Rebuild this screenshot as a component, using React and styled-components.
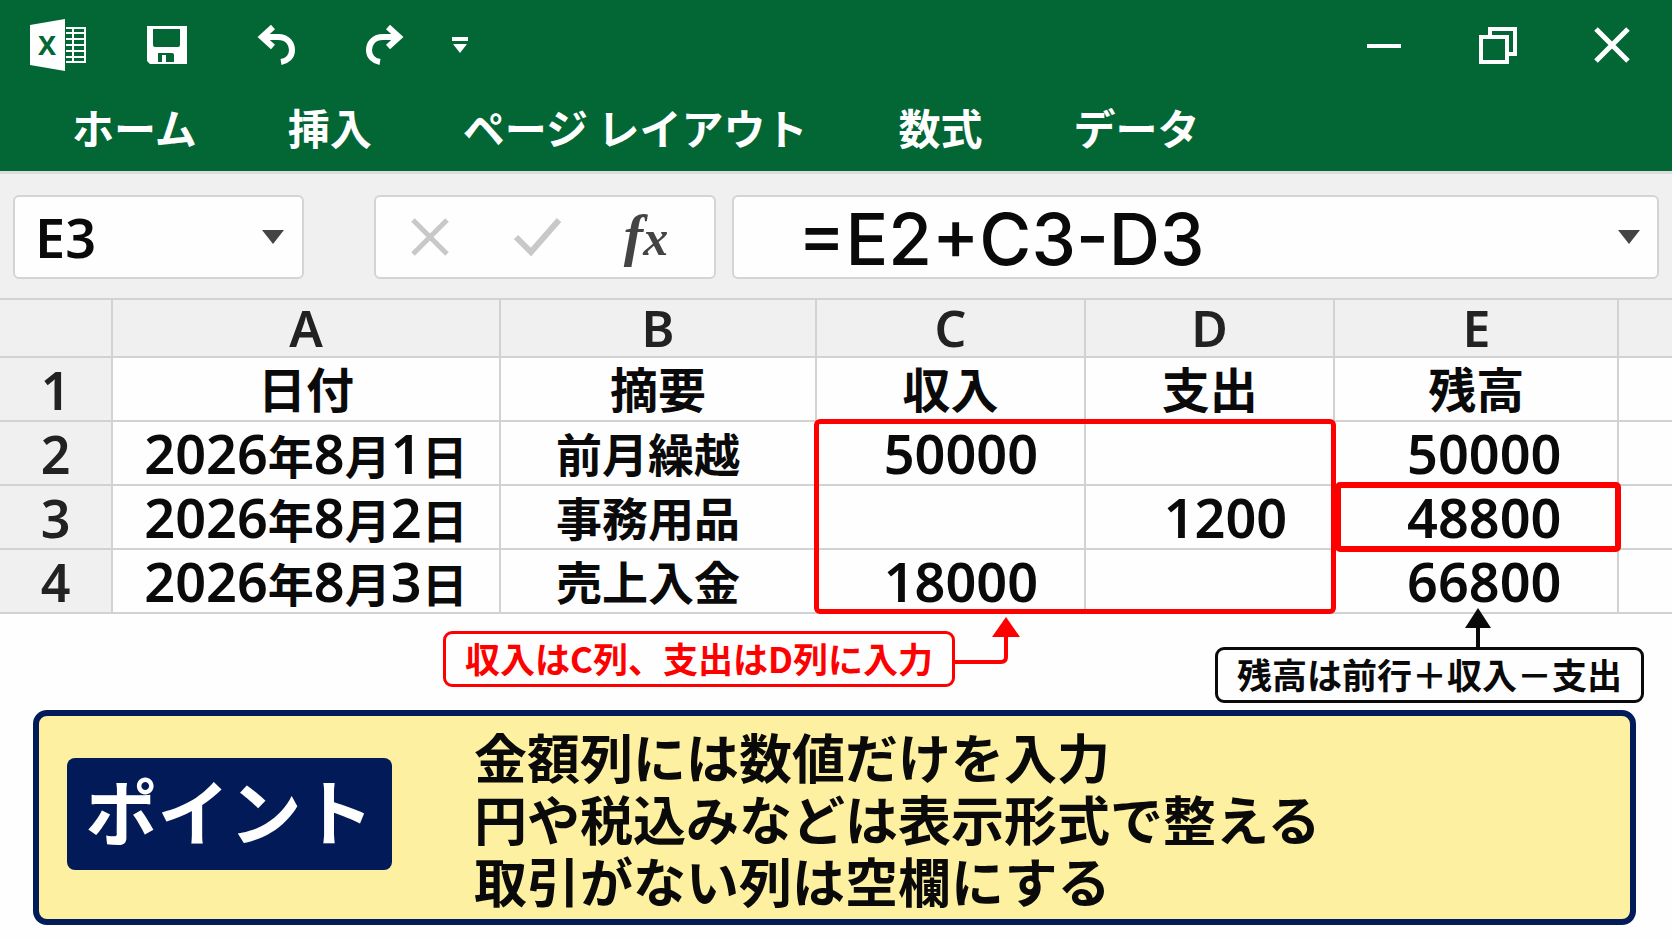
import React, { useState } from 'react'
import styled, { createGlobalStyle } from 'styled-components';

const rows = [
  { no: 2, date: [2026, 8, 1], memo: '前月繰越', income: '50000', expense: '', balance: '50000' },
  { no: 3, date: [2026, 8, 2], memo: '事務用品', income: '', expense: '1200', balance: '48800' },
  { no: 4, date: [2026, 8, 3], memo: '売上入金', income: '18000', expense: '', balance: '66800' },
]

const tabs = ['ホーム', '挿入', 'ページ レイアウト', '数式', 'データ']

function ExcelLogo() {
  return (
    <svg width="56" height="52" viewBox="0 0 56 52" role="img" aria-label="Excel">
      <path d="M0 6 L35 0 V52 L0 46 Z" fill="#fff" />
      <path d="M36 9 H55 V43 H36" fill="none" stroke="#fff" strokeWidth="2" />
      <path d="M36 14 H54 M36 20 H54 M36 26 H54 M36 32 H54 M36 38 H54 M43 9 V43" fill="none" stroke="#fff" strokeWidth="2" />
      <text x="17" y="36" textAnchor="middle" fontFamily="Noto Sans, sans-serif" fontWeight="700" fontSize="27" fill="#036635">X</text>
    </svg>
  )
}

function SaveIcon() {
  return (
    <svg width="42" height="40" viewBox="0 0 42 40">
      <path fillRule="evenodd" fill="#fff" d="M1 1 H41 V39 H4 L1 36 Z M7 4 V20 Q7 22 9 22 H32 Q34 22 34 20 V4 Z M12 28 V37 H16 V30 H20 V37 H28 V30 Q28 28 26 28 Z" />
    </svg>
  )
}

function UndoIcon({ flip }) {
  return (
    <svg width="40" height="42" viewBox="0 0 40 42">
      <g transform={flip ? 'translate(40 0) scale(-1 1)' : undefined} fill="none" stroke="#fff" strokeWidth="6">
        <path d="M17 3 L6 13 L17 23" />
        <path d="M7 13 H22 C32 13 36 20 36 26 C36 33 31 37 25 38" />
      </g>
    </svg>
  )
}

function App() {
  const [name, setName] = useState('E3')
  const [formula, setFormula] = useState('=E2+C3-D3')

  return (
    <>
      <GlobalStyle />
      <Header>
        <TitleBar>
          <QuickAccess>
            <IconSlot><ExcelLogo /></IconSlot>
            <IconButton aria-label="保存"><SaveIcon /></IconButton>
            <IconButton aria-label="元に戻す"><UndoIcon /></IconButton>
            <IconButton aria-label="やり直し"><UndoIcon flip /></IconButton>
            <IconButton $narrow aria-label="カスタマイズ">
              <svg width="16" height="16" viewBox="0 0 16 16" fill="#fff">
                <path d="M0 0 H16 V4 H0 Z M1 7 H15 L8 16 Z" />
              </svg>
            </IconButton>
          </QuickAccess>
          <WindowButtons>
            <IconButton aria-label="最小化">
              <svg width="34" height="38" viewBox="0 0 34 38"><path d="M0 20 H34" stroke="#fff" strokeWidth="4" /></svg>
            </IconButton>
            <IconButton aria-label="元のサイズに戻す">
              <svg width="38" height="38" viewBox="0 0 38 38" fill="none" stroke="#fff" strokeWidth="4">
                <path d="M2 11 H28 V36 H2 Z M11 11 V3 H36 V28 H28" />
              </svg>
            </IconButton>
            <IconButton aria-label="閉じる">
              <svg width="36" height="38" viewBox="0 0 36 38"><path d="M2 3 L34 35 M34 3 L2 35" stroke="#fff" strokeWidth="5" /></svg>
            </IconButton>
          </WindowButtons>
        </TitleBar>
        <Tabs>
          {tabs.map((tab) => (
            <Tab key={tab}>{tab}</Tab>
          ))}
        </Tabs>
      </Header>

      <FormulaBar>
        <NameBox>
          <NameInput aria-label="名前ボックス" value={name} onChange={(e) => setName(e.target.value)} />
          <Caret aria-label="名前の一覧" />
        </NameBox>
        <FormulaButtons>
          <FormulaButton aria-label="キャンセル">
            <svg width="38" height="38" viewBox="0 0 38 38"><path d="M2 2 L36 36 M36 2 L2 36" stroke="#c8c8c8" strokeWidth="5" /></svg>
          </FormulaButton>
          <FormulaButton aria-label="入力">
            <svg width="48" height="38" viewBox="0 0 48 38"><path d="M2 19 L17 34 L45 2" fill="none" stroke="#c8c8c8" strokeWidth="6" /></svg>
          </FormulaButton>
          <FormulaButton aria-label="関数の挿入"><i>f</i><small>x</small></FormulaButton>
        </FormulaButtons>
        <FormulaBox>
          <FormulaInput aria-label="数式バー" value={formula} onChange={(e) => setFormula(e.target.value)} />
          <Caret aria-label="数式バーの展開" />
        </FormulaBox>
      </FormulaBar>

      <Sheet>
        <Table>
          <colgroup>
            <Col $w="6.7%" />
            <Col $w="23.2%" />
            <Col $w="18.9%" />
            <Col $w="16.1%" />
            <Col $w="14.9%" />
            <Col $w="17%" />
            <Col />
          </colgroup>
          <thead>
            <tr>
              <ColHead />
              {['A', 'B', 'C', 'D', 'E'].map((c) => (
                <ColHead key={c} scope="col">{c}</ColHead>
              ))}
              <ColHead />
            </tr>
          </thead>
          <tbody>
            <tr>
              <RowHead scope="row">1</RowHead>
              <TitleCell>日付</TitleCell>
              <TitleCell>摘要</TitleCell>
              <TitleCell>収入</TitleCell>
              <TitleCell>支出</TitleCell>
              <TitleCell>残高</TitleCell>
              <Cell />
            </tr>
            {rows.map((r) => (
              <tr key={r.no}>
                <RowHead scope="row">{r.no}</RowHead>
                <Cell><Num>{r.date[0]}</Num>年<Num>{r.date[1]}</Num>月<Num>{r.date[2]}</Num>日</Cell>
                <MemoCell>{r.memo}</MemoCell>
                <Cell $right="46px"><Num>{r.income}</Num></Cell>
                <Cell $right="46px"><Num>{r.expense}</Num></Cell>
                <Cell $right="56px"><Num>{r.balance}</Num></Cell>
                <Cell />
              </tr>
            ))}
          </tbody>
        </Table>
        <InputRange />
        <ActiveCell />
      </Sheet>

      <Notes>
        <InputNote>
          <NoteBox $color="#ff0000">収入はC列、支出はD列に入力</NoteBox>
          <svg width="68" height="48" viewBox="0 0 68 48">
            <path d="M0 45 H46 Q51 45 51 40 V18" fill="none" stroke="#ff0000" strokeWidth="4" />
            <path d="M51 0 L65 20 H37 Z" fill="#ff0000" />
          </svg>
        </InputNote>
        <BalanceNote>
          <NoteBox $color="#0a0a0a">残高は前行＋収入－支出</NoteBox>
          <UpArrow width="28" height="39" viewBox="0 0 28 39">
            <path d="M14 39 V16" stroke="#0a0a0a" strokeWidth="4" />
            <path d="M14 0 L27 20 H1 Z" fill="#0a0a0a" />
          </UpArrow>
        </BalanceNote>
      </Notes>

      <PointPanel>
        <PointBadge>ポイント</PointBadge>
        <PointText>
          <p>金額列には数値だけを入力</p>
          <p>円や税込みなどは表示形式で整える</p>
          <p>取引がない列は空欄にする</p>
        </PointText>
      </PointPanel>
    </>
  )
}

const GlobalStyle = createGlobalStyle`
*{
  box-sizing:border-box;
}
body{
  margin:0;
  background:#fefefe;
  color:#0a0a0a;
  font-family:"Noto Sans", "Noto Sans CJK JP", sans-serif;
}
button, input{
  border:none;
  background:none;
  padding:0;
  color:inherit;
  font-family:inherit;
}
p{
  margin:0;
}
svg{
  display:block;
  flex:none;
}
`
const Header = styled.header`
background:#036635;
color:#fff;
border-bottom:3px solid #dcdcdc;
`
const TitleBar = styled.div`
display:flex;
justify-content:space-between;
height:90px;
padding:0 10px 0 8px;
`
const QuickAccess = styled.div`
display:flex;
align-items:center;
gap:9px;
`
const WindowButtons = styled.div`
display:flex;
align-items:center;
gap:14px;
`
const IconSlot = styled.div`
display:flex;
justify-content:center;
width:100px;
`
const IconButton = styled.button`
display:flex;
align-items:center;
justify-content:center;
width:${(p) => (p.$narrow ? '32px' : '100px')};
height:64px;
`
const Tabs = styled.nav`
display:flex;
gap:91px;
padding:0 72px;
height:81px;
`
const Tab = styled.button`
height:74px;
font-family:"Noto Sans CJK JP", sans-serif;
font-size:42px;
font-weight:700;
line-height:74px;
white-space:nowrap;
`
const FormulaBar = styled.div`
display:flex;
gap:16px;
padding:21px 13px 19px;
background:#f0f0f0;
`
const Box = styled.div`
display:flex;
flex:none;
align-items:center;
height:84px;
background:#fefefe;
border:2px solid #d4d4d4;
border-radius:6px;
`
const NameBox = styled(Box)`
width:291px;
margin-right:54px;
padding:0 18px 0 20px;
`
const NameInput = styled.input`
flex:1;
min-width:0;
height:72px;
font-size:54px;
font-weight:600;
`
const Caret = styled.button`
width:22px;
height:14px;
background:#444;
clip-path:polygon(0 0, 100% 0, 50% 100%);
`
const FormulaButtons = styled(Box)`
width:342px;
`
const FormulaButton = styled.button`
display:flex;
align-items:baseline;
justify-content:center;
width:108px;
color:#444;
font-family:"Liberation Serif", serif;
font-style:italic;
font-weight:700;
font-size:58px;
line-height:64px;
small{
  font-size:50px;
}
`
const FormulaBox = styled(Box)`
flex:1;
min-width:0;
padding:0 17px 0 64px;
`
const FormulaInput = styled.input`
flex:1;
min-width:0;
height:80px;
padding-top:4px;
font-family:Inter, sans-serif;
font-size:71px;
font-weight:500;
`
const Sheet = styled.div`
position:relative;
`
const Table = styled.table`
width:100%;
table-layout:fixed;
border-collapse:collapse;
`
const Col = styled.col`
width:${(p) => p.$w || 'auto'};
`
const ColHead = styled.th`
height:58px;
padding:0;
background:#f0f0f0;
border:2px solid #d2d2d2;
border-left-width:0;
color:#222;
font-size:50px;
font-weight:600;
line-height:52px;
&:last-child{
  border-right-width:0;
}
`
const RowHead = styled.th`
height:64px;
padding:2px 0 0;
background:#f0f0f0;
border:2px solid #d2d2d2;
border-left-width:0;
color:#222;
font-size:52px;
font-weight:600;
line-height:56px;
`
const Cell = styled.td`
height:64px;
padding:2px ${(p) => p.$right || 0} 0 0;
border:2px solid #d2d2d2;
font-size:46px;
font-weight:700;
line-height:56px;
text-align:${(p) => (p.$right ? 'right' : 'center')};
white-space:nowrap;
&:last-child{
  border-right-width:0;
}
`
const TitleCell = styled(Cell)`
font-size:48px;
`
const MemoCell = styled(Cell)`
padding-right:20px;
`
const Num = styled.span`
font-size:54px;
font-weight:600;
line-height:56px;
`
const InputRange = styled.div`
position:absolute;
left:calc(48.8% - 2px);
right:calc(20.2% - 2px);
top:121px;
bottom:0;
border:5px solid #ff0000;
border-radius:6px;
`
const ActiveCell = styled.div`
position:absolute;
left:calc(79.8% + 1px);
right:calc(3.2% - 2px);
bottom:62px;
height:70px;
border:6px solid #ff0000;
border-radius:5px;
`
const Notes = styled.div`
display:flex;
justify-content:space-between;
align-items:flex-start;
height:96px;
padding-left:26.5%;
padding-right:28px;
`
const NoteBox = styled.div`
height:56px;
padding:0 19px;
border:3px solid ${(p) => p.$color};
border-radius:9px;
color:${(p) => p.$color};
background:#fefefe;
font-family:"Noto Sans CJK JP", sans-serif;
font-size:35px;
font-weight:700;
line-height:48px;
white-space:nowrap;
`
const InputNote = styled.div`
display:flex;
padding-top:3px;
${NoteBox}{
  margin-top:14px;
}
`
const BalanceNote = styled.div`
position:relative;
margin-top:33px;
`
const UpArrow = styled.svg`
position:absolute;
right:152px;
bottom:100%;
`
const PointPanel = styled.section`
display:flex;
align-items:center;
margin:0 36px 16px 33px;
padding:9px 28px 8px;
background:#fdf0a0;
border:6px solid #021c5a;
border-radius:14px;
`
const PointBadge = styled.h2`
width:325px;
height:112px;
margin:0 0 8px;
background:#021a57;
border-radius:8px;
color:#fff;
font-family:"Noto Sans CJK JP", sans-serif;
font-size:72px;
font-weight:700;
line-height:102px;
text-align:center;
`
const PointText = styled.div`
margin-left:82px;
font-family:"Noto Sans CJK JP", sans-serif;
font-size:53px;
font-weight:700;
line-height:62px;
white-space:nowrap;
`

export default App
